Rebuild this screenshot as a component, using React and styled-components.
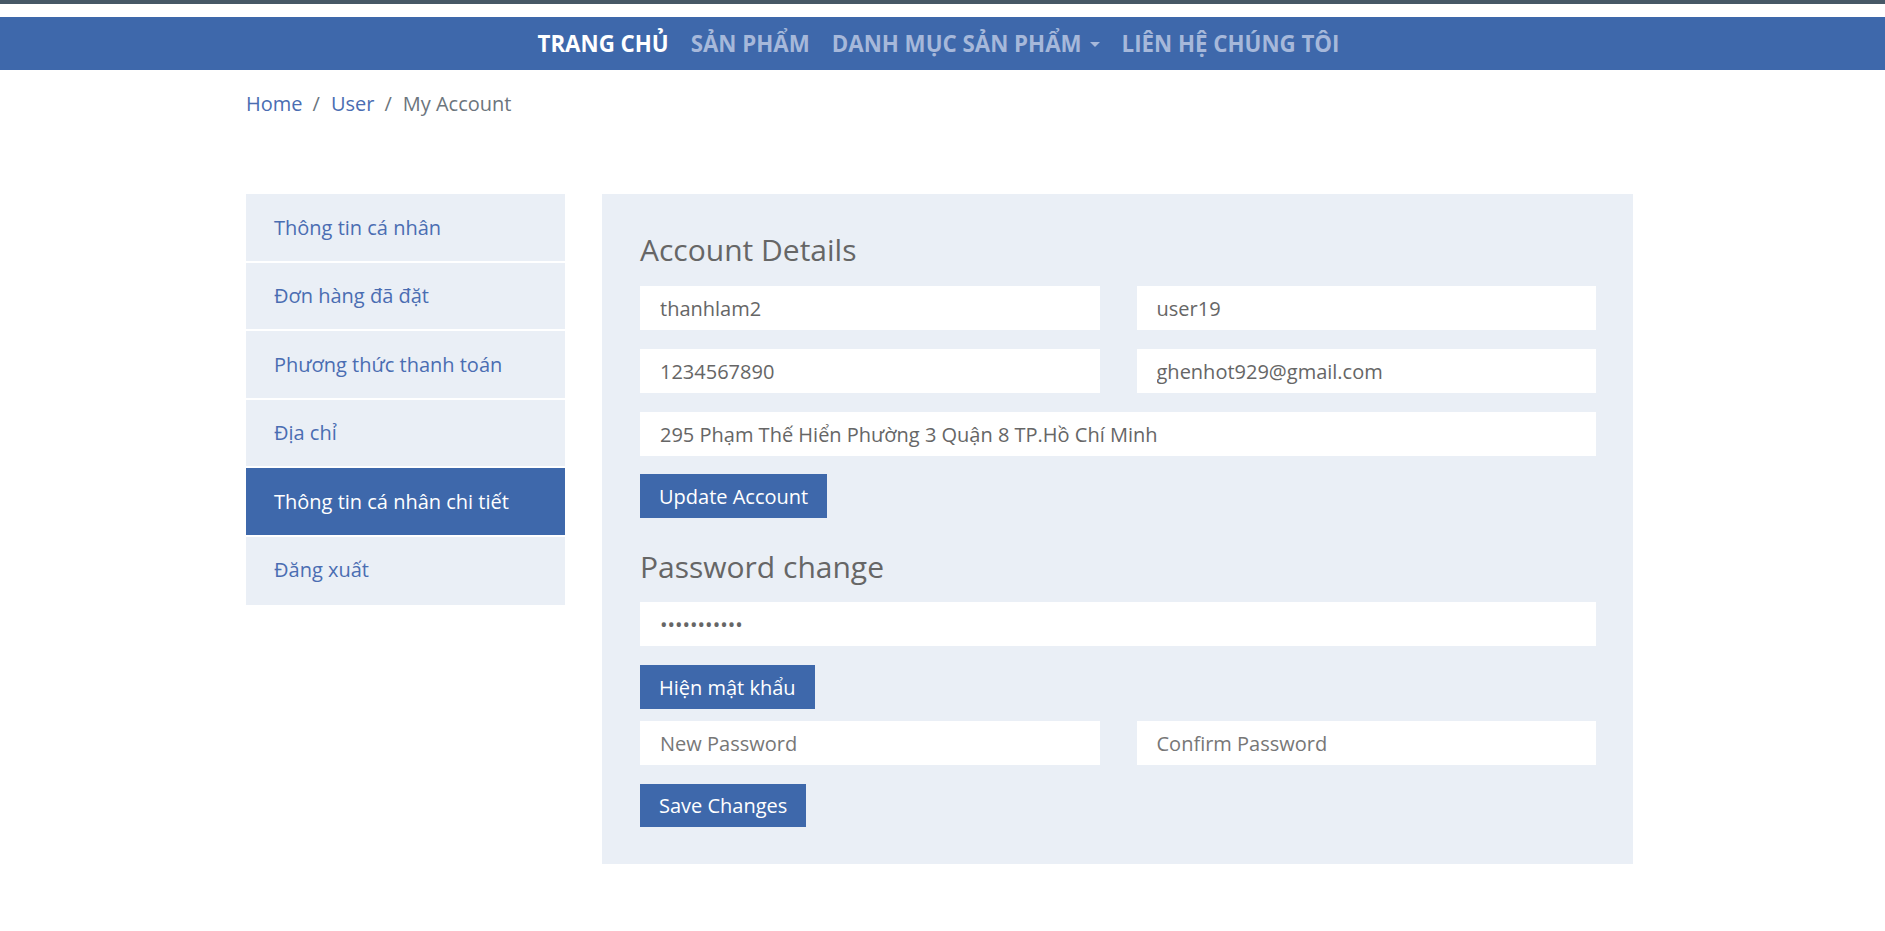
import React from 'react';
import styled, { createGlobalStyle } from 'styled-components';

const GlobalStyle = createGlobalStyle`
  body {
    margin: 0;
    background: #fff;
    font-family: 'Open Sans', 'Noto Sans', sans-serif;
    font-size: 20px;
    color: #666;
  }
  * { box-sizing: border-box; }
`;

const blue = '#3e68ab';
const pale = '#eaeff6';

const TopStrip = styled.div`
  height: 4px;
  background: #475866;
  margin-bottom: 13px;
`;

const NavBar = styled.nav`
  height: 53px;
  background: ${blue};
  display: flex;
  justify-content: center;
  align-items: center;
  padding-right: 8px;
`;

const NavLink = styled.a`
  display: flex;
  align-items: center;
  padding: 0 11px;
  font-size: 22.3px;
  font-weight: 700;
  line-height: 1.5;
  text-decoration: none;
  color: ${(p) => (p.$active ? '#fff' : '#a6b8da')};
  cursor: pointer;

  ${(p) =>
    p.$caret &&
    `
    &::after {
      content: '';
      margin-left: 8px;
      margin-top: 2px;
      border-top: 5px solid #a6b8da;
      border-left: 5px solid transparent;
      border-right: 5px solid transparent;
    }
  `}
`;

const Container = styled.div`
  width: 1387px;
  margin-left: 246px;
`;

const Breadcrumb = styled.ol`
  list-style: none;
  display: flex;
  margin: 19px 0 0;
  padding: 0;
  line-height: 30px;
  font-size: 20px;
`;

const Crumb = styled.li`
  color: ${(p) => (p.$current ? '#6c757d' : '#4a6db2')};

  &:not(:first-child)::before {
    content: '/';
    color: #6c757d;
    padding: 0 11px 0 10px;
  }
`;

const Main = styled.div`
  display: flex;
  align-items: flex-start;
  gap: 37px;
  margin-top: 75px;
  margin-bottom: 60px;
`;

const Sidebar = styled.ul`
  width: 319px;
  flex-shrink: 0;
  list-style: none;
  margin: 0;
  padding: 0;
`;

const SideItem = styled.li`
  padding: 18.5px 28px 18px;
  line-height: 30px;
  font-size: 20px;
  background: ${(p) => (p.$active ? blue : pale)};
  color: ${(p) => (p.$active ? '#fff' : '#4a6db2')};
  border-bottom: 2px solid #fff;

  &:last-child {
    border-bottom: none;
    height: 68.5px;
  }
`;

const Panel = styled.section`
  flex: 1;
  background: ${pale};
  padding: 38px 37px 37px 38px;
`;

const Heading = styled.h4`
  margin: ${(p) => p.$top || 0}px 0 ${(p) => p.$bottom || 18}px;
  font-size: 30px;
  font-weight: 400;
  line-height: 36px;
  color: #666;
`;

const Row = styled.div`
  display: grid;
  grid-template-columns: ${(p) => (p.$single ? '1fr' : '1fr 1fr')};
  column-gap: 37px;
  margin-bottom: ${(p) => (p.$gap !== undefined ? p.$gap : 19)}px;
`;

const Field = styled.input`
  display: block;
  width: 100%;
  height: 44px;
  border: none;
  outline: none;
  background: #fff;
  padding: 0 20px;
  font-family: 'Open Sans', 'Noto Sans', sans-serif;
  font-size: 20px;
  color: #666;

  &::placeholder {
    color: #777;
  }
`;

const Button = styled.button`
  display: block;
  height: ${(p) => p.$h || 44}px;
  padding: 0 19px;
  border: none;
  background: ${blue};
  color: #fff;
  font-family: 'Open Sans', 'Noto Sans', sans-serif;
  font-size: 20px;
  cursor: pointer;
  margin-bottom: ${(p) => p.$gap || 0}px;
`;

const menu = [
  'Thông tin cá nhân',
  'Đơn hàng đã đặt',
  'Phương thức thanh toán',
  'Địa chỉ',
  'Thông tin cá nhân chi tiết',
  'Đăng xuất',
];

export default function App() {
  return (
    <>
      <GlobalStyle />
      <TopStrip />
      <NavBar>
        <NavLink $active>TRANG CHỦ</NavLink>
        <NavLink>SẢN PHẨM</NavLink>
        <NavLink $caret>DANH MỤC SẢN PHẨM</NavLink>
        <NavLink>LIÊN HỆ CHÚNG TÔI</NavLink>
      </NavBar>

      <Container>
        <Breadcrumb>
          <Crumb>Home</Crumb>
          <Crumb>User</Crumb>
          <Crumb $current>My Account</Crumb>
        </Breadcrumb>

        <Main>
          <Sidebar>
            {menu.map((m, i) => (
              <SideItem key={m} $active={i === 4}>
                {m}
              </SideItem>
            ))}
          </Sidebar>

          <Panel>
            <Heading>Account Details</Heading>
            <Row>
              <Field defaultValue="thanhlam2" />
              <Field defaultValue="user19" />
            </Row>
            <Row>
              <Field defaultValue="1234567890" />
              <Field defaultValue="ghenhot929@gmail.com" />
            </Row>
            <Row $single $gap={18}>
              <Field defaultValue="295 Phạm Thế Hiển Phường 3 Quận 8 TP.Hồ Chí Minh" />
            </Row>
            <Button>Update Account</Button>

            <Heading $top={31} $bottom={17}>Password change</Heading>
            <Row $single>
              <Field type="password" defaultValue="thanhlam123" />
            </Row>
            <Button $gap={12}>Hiện mật khẩu</Button>
            <Row>
              <Field type="password" placeholder="New Password" />
              <Field type="password" placeholder="Confirm Password" />
            </Row>
            <Button $h={43}>Save Changes</Button>
          </Panel>
        </Main>
      </Container>
    </>
  );
}
